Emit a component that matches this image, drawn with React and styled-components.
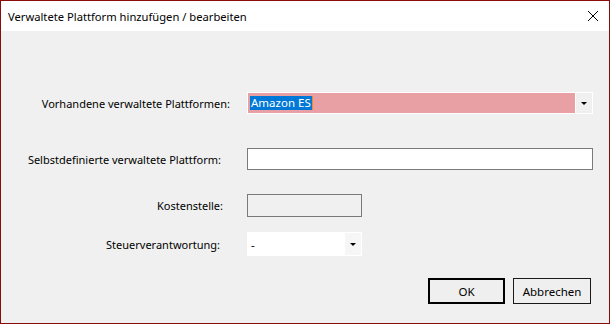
import React from 'react'
import styled, { createGlobalStyle } from 'styled-components'

const GlobalStyle = createGlobalStyle`
  html, body {
    margin: 0;
    padding: 0;
    background: #ffffff;
  }
  * {
    box-sizing: border-box;
  }
`

const font = `"Segoe UI", "Noto Sans", "Liberation Sans", sans-serif`

const Window = styled.div`
  width: 610px;
  height: 324px;
  display: flex;
  flex-direction: column;
  border: 1px solid #8b0a0a;
  font-family: ${font};
  font-size: 11px;
  color: #000;
  background: #f0f0f0;
`

const TitleBar = styled.div`
  height: 30px;
  flex: none;
  display: flex;
  align-items: center;
  justify-content: space-between;
  padding: 0 10px 0 7px;
  background: #ffffff;
`

const Title = styled.span`
  font-size: 11.2px;
  line-height: 1;
  padding-top: 1px;
`

const CloseButton = styled.span`
  display: flex;
  width: 12px;
  height: 12px;
`

const Body = styled.div`
  flex: 1;
  display: flex;
  flex-direction: column;
  padding: 61px 16px 0 0;
`

const Row = styled.div`
  display: grid;
  grid-template-columns: 246px 1fr;
  align-items: center;
  margin-top: ${({ $mt }) => $mt || 0}px;
`

const Label = styled.label`
  text-align: right;
  white-space: nowrap;
  padding-right: ${({ $gap }) => $gap}px;
  line-height: 1;
`

const Combo = styled.div`
  display: flex;
  align-items: stretch;
  width: ${({ $width }) => ($width ? `${$width}px` : '100%')};
  height: ${({ $height }) => $height || 22}px;
  border: 1px solid #ffffff;
  background: ${({ $bg }) => $bg || '#ffffff'};
`

const ComboValue = styled.div`
  flex: 1;
  display: flex;
  align-items: center;
  padding-left: 2px;
  font-size: 11.5px;
`

const Selected = styled.span`
  background: #0078d7;
  color: #ffffff;
  padding: 1px 1px 2px 1px;
  line-height: 1;
  border-right: 1px solid #f08a24;
`

const PlainValue = styled.span`
  padding-left: 1px;
`

const DropButton = styled.div`
  width: 17px;
  flex: none;
  display: flex;
  align-items: center;
  justify-content: center;
  border-left: 1px solid #ffffff;
  background: ${({ $bg }) => $bg || '#f0f0f0'};
`

const Arrow = styled.span`
  width: 0;
  height: 0;
  border-left: 3px solid transparent;
  border-right: 3px solid transparent;
  border-top: 3px solid #000;
  margin-top: 1px;
`

const TextBox = styled.div`
  width: ${({ $width }) => ($width ? `${$width}px` : '100%')};
  height: ${({ $height }) => $height || 22}px;
  border: 1px solid #7a7a7a;
  background: ${({ $disabled }) => ($disabled ? '#f0f0f0' : '#ffffff')};
`

const Buttons = styled.div`
  display: flex;
  justify-content: flex-end;
  gap: 8px;
  margin-top: 22px;
  padding-right: 2px;
`

const Button = styled.button`
  width: ${({ $width }) => $width}px;
  height: 26px;
  padding: 0;
  font-family: ${font};
  font-size: 11.5px;
  color: #000;
  background: #efefef;
  border: ${({ $default }) => ($default ? '2px solid #000' : '1px solid #1a1a1a')};
`

const App = () => {
  return (
    <>
      <GlobalStyle />
      <Window>
        <TitleBar>
          <Title>Verwaltete Plattform hinzufügen / bearbeiten</Title>
          <CloseButton>
            <svg width="12" height="12" viewBox="0 0 12 12">
              <path d="M1 1 L11 11 M11 1 L1 11" stroke="#000" strokeWidth="1" fill="none" />
            </svg>
          </CloseButton>
        </TitleBar>
        <Body>
          <Row>
            <Label $gap={17}>Vorhandene verwaltete Plattformen:</Label>
            <Combo $bg="#e8a0a4">
              <ComboValue>
                <Selected>Amazon ES</Selected>
              </ComboValue>
              <DropButton>
                <Arrow />
              </DropButton>
            </Combo>
          </Row>
          <Row $mt={34}>
            <Label $gap={26}>Selbstdefinierte verwaltete Plattform:</Label>
            <TextBox />
          </Row>
          <Row $mt={24}>
            <Label $gap={24}>Kostenstelle:</Label>
            <TextBox $width={115} $height={23} $disabled />
          </Row>
          <Row $mt={15}>
            <Label $gap={27}>Steuerverantwortung:</Label>
            <Combo $width={115} $height={24}>
              <ComboValue>
                <PlainValue>-</PlainValue>
              </ComboValue>
              <DropButton $bg="#f6f6f6">
                <Arrow />
              </DropButton>
            </Combo>
          </Row>
          <Buttons>
            <Button $default $width={77}>OK</Button>
            <Button $width={78}>Abbrechen</Button>
          </Buttons>
        </Body>
      </Window>
    </>
  )
}

export default App
